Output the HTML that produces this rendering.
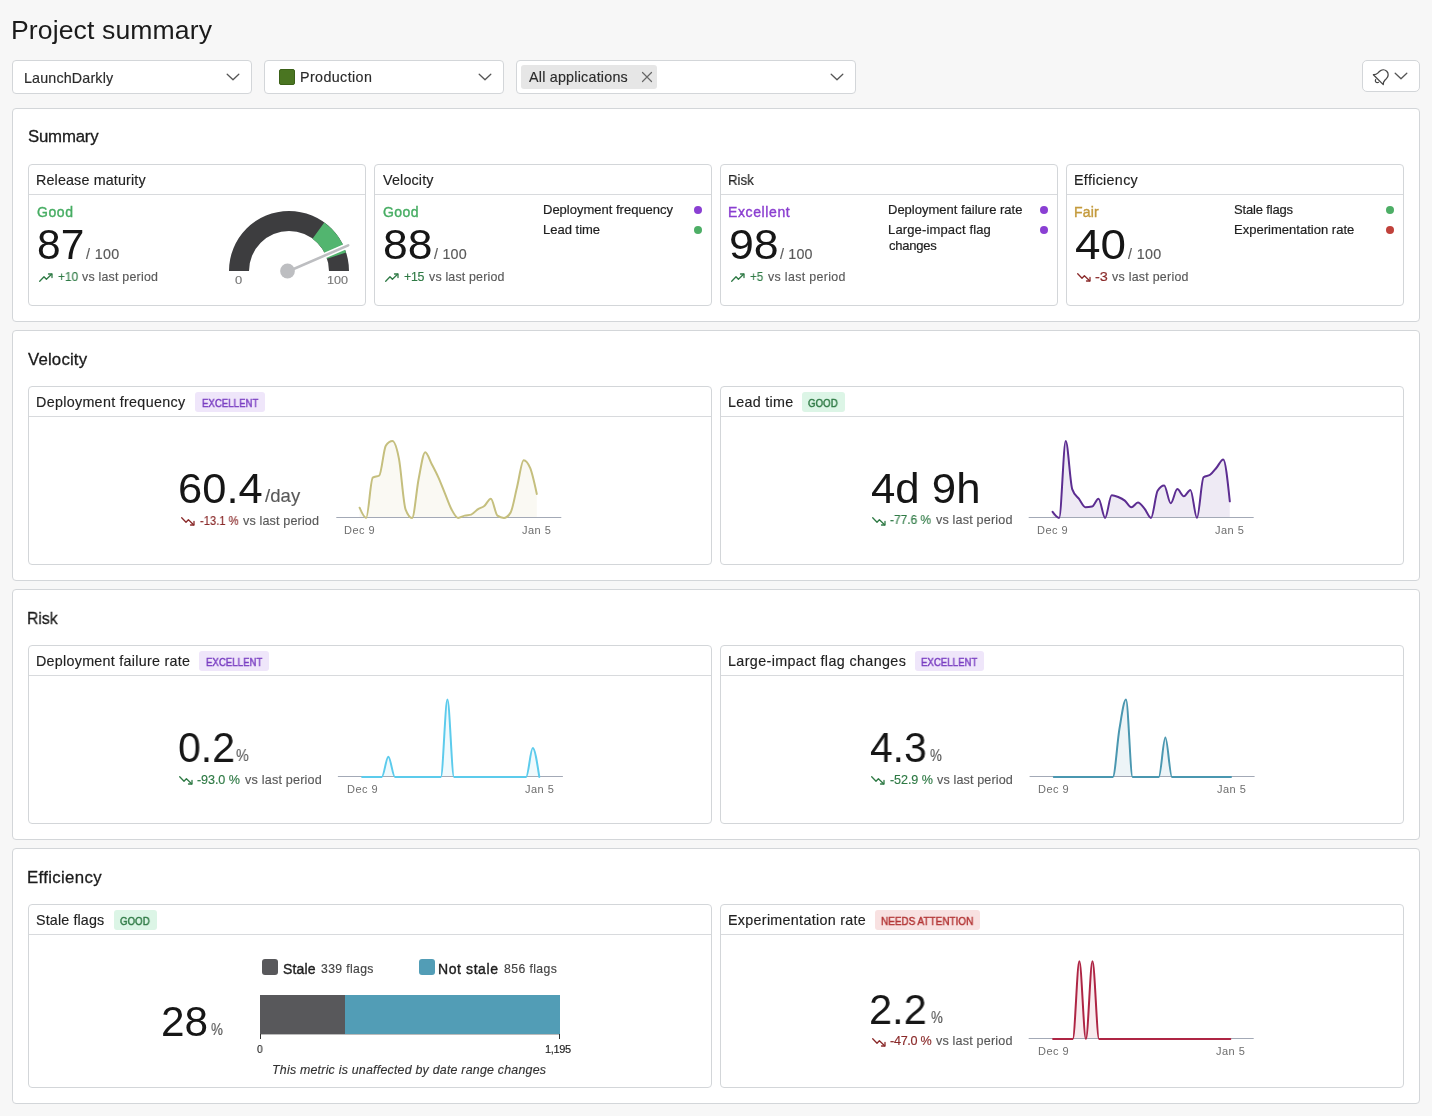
<!DOCTYPE html>
<html><head><meta charset="utf-8"><title>Project summary</title>
<style>
html,body{margin:0;padding:0;}
body{width:1432px;height:1116px;overflow:hidden;position:relative;background:#f7f7f7;font-family:"Liberation Sans", sans-serif;}
.t{position:absolute;white-space:nowrap;line-height:1;will-change:transform;}
.b{position:absolute;box-sizing:border-box;}
.ic{position:absolute;overflow:visible;}
</style></head><body>
<div class="t" style="left:11.30px;top:16.98px;font-size:26.6px;color:#1b1b1b;letter-spacing:0.107px;">Project summary</div>
<div class="b" style="left:12px;top:60px;width:240px;height:34px;background:#fff;border:1px solid #d3d6d9;border-radius:4px;"></div>
<div class="t" style="left:24.20px;top:70.54px;font-size:14.3px;color:#2b2b2b;letter-spacing:0.158px;-webkit-text-stroke:0.15px currentColor;">LaunchDarkly</div>
<svg class="ic" style="left:226px;top:72px" width="14" height="10" viewBox="0 0 14 10"><path d="M1.2 2.2 L7 7.8 L12.8 2.2" fill="none" stroke="#555" stroke-width="1.3" stroke-linecap="round" stroke-linejoin="round"/></svg>
<div class="b" style="left:264px;top:60px;width:240px;height:34px;background:#fff;border:1px solid #d3d6d9;border-radius:4px;"></div>
<div class="b" style="left:279px;top:69px;width:16px;height:16px;background:#4a7521;border:1px solid #3b6118;border-radius:2px;"></div>
<div class="t" style="left:300.00px;top:70.40px;font-size:14.3px;color:#2b2b2b;letter-spacing:0.389px;-webkit-text-stroke:0.15px currentColor;">Production</div>
<svg class="ic" style="left:478px;top:72px" width="14" height="10" viewBox="0 0 14 10"><path d="M1.2 2.2 L7 7.8 L12.8 2.2" fill="none" stroke="#555" stroke-width="1.3" stroke-linecap="round" stroke-linejoin="round"/></svg>
<div class="b" style="left:516px;top:60px;width:340px;height:34px;background:#fff;border:1px solid #d3d6d9;border-radius:4px;"></div>
<div class="b" style="left:521px;top:65px;width:136px;height:24px;background:#e6e6e6;border-radius:3px;"></div>
<div class="t" style="left:529.20px;top:69.98px;font-size:14.3px;color:#2b2b2b;letter-spacing:0.225px;-webkit-text-stroke:0.15px currentColor;">All applications</div>
<svg class="ic" style="left:641px;top:71px" width="12" height="12" viewBox="0 0 12 12"><path d="M1.5 1.5 L10.5 10.5 M10.5 1.5 L1.5 10.5" stroke="#666" stroke-width="1.2" stroke-linecap="round"/></svg>
<svg class="ic" style="left:829.6px;top:72px" width="14" height="10" viewBox="0 0 14 10"><path d="M1.2 2.2 L7 7.8 L12.8 2.2" fill="none" stroke="#555" stroke-width="1.3" stroke-linecap="round" stroke-linejoin="round"/></svg>
<div class="b" style="left:1362px;top:60px;width:58px;height:32px;background:#fff;border:1px solid #d3d6d9;border-radius:5px;"></div>
<svg class="ic" style="left:1371.8px;top:65.5px" width="20" height="20" viewBox="0 0 20 20"><g transform="rotate(45 10 10)" fill="none" stroke="#444" stroke-width="1.25" stroke-linejoin="round" stroke-linecap="round"><path d="M3 15.2 L17 15.2 C15.6 14 15 12.7 15 11 L15 8.7 C15 5.6 12.8 3.3 10 3.3 C7.2 3.3 5 5.6 5 8.7 L5 11 C5 12.7 4.4 14 3 15.2 Z"/><path d="M8 16.9 C8.3 18 9.1 18.6 10 18.6 C10.9 18.6 11.7 18 12 16.9"/></g></svg>
<svg class="ic" style="left:1394px;top:71px" width="14" height="10" viewBox="0 0 14 10"><path d="M1.2 2.2 L7 7.8 L12.8 2.2" fill="none" stroke="#555" stroke-width="1.3" stroke-linecap="round" stroke-linejoin="round"/></svg>
<div class="b" style="left:12px;top:108px;width:1408px;height:214px;background:#fff;border:1px solid #d3d6d9;border-radius:4px;"></div>
<div class="t" style="left:27.90px;top:129.38px;font-size:16.8px;color:#1b1b1b;letter-spacing:-0.201px;-webkit-text-stroke:0.3px currentColor;">Summary</div>
<div class="b" style="left:12px;top:330px;width:1408px;height:251px;background:#fff;border:1px solid #d3d6d9;border-radius:4px;"></div>
<div class="t" style="left:28.40px;top:351.64px;font-size:16.8px;color:#1b1b1b;letter-spacing:0.180px;-webkit-text-stroke:0.3px currentColor;">Velocity</div>
<div class="b" style="left:12px;top:589px;width:1408px;height:251px;background:#fff;border:1px solid #d3d6d9;border-radius:4px;"></div>
<div class="t" style="left:27.46px;top:610.54px;font-size:16.8px;color:#1b1b1b;transform:scaleX(0.9399);transform-origin:0 0;-webkit-text-stroke:0.3px currentColor;">Risk</div>
<div class="b" style="left:12px;top:848px;width:1408px;height:256px;background:#fff;border:1px solid #d3d6d9;border-radius:4px;"></div>
<div class="t" style="left:27.40px;top:869.54px;font-size:16.8px;color:#1b1b1b;letter-spacing:0.342px;-webkit-text-stroke:0.3px currentColor;">Efficiency</div>
<div class="b" style="left:28px;top:164px;width:338px;height:142px;background:#fff;border:1px solid #d3d6d9;border-radius:4px;"></div>
<div class="b" style="left:29px;top:194px;width:336px;height:1px;background:#d8dadd;"></div>
<div class="t" style="left:36.30px;top:173.40px;font-size:14.3px;color:#222;letter-spacing:0.152px;-webkit-text-stroke:0.15px currentColor;">Release maturity</div>
<div class="b" style="left:374px;top:164px;width:338px;height:142px;background:#fff;border:1px solid #d3d6d9;border-radius:4px;"></div>
<div class="b" style="left:375px;top:194px;width:336px;height:1px;background:#d8dadd;"></div>
<div class="t" style="left:383.30px;top:173.40px;font-size:14.3px;color:#222;letter-spacing:0.168px;-webkit-text-stroke:0.15px currentColor;">Velocity</div>
<div class="b" style="left:720px;top:164px;width:338px;height:142px;background:#fff;border:1px solid #d3d6d9;border-radius:4px;"></div>
<div class="b" style="left:721px;top:194px;width:336px;height:1px;background:#d8dadd;"></div>
<div class="t" style="left:728.37px;top:173.40px;font-size:14.3px;color:#222;transform:scaleX(0.9259);transform-origin:0 0;-webkit-text-stroke:0.15px currentColor;">Risk</div>
<div class="b" style="left:1066px;top:164px;width:338px;height:142px;background:#fff;border:1px solid #d3d6d9;border-radius:4px;"></div>
<div class="b" style="left:1067px;top:194px;width:336px;height:1px;background:#d8dadd;"></div>
<div class="t" style="left:1074.30px;top:173.40px;font-size:14.3px;color:#222;letter-spacing:0.314px;-webkit-text-stroke:0.15px currentColor;">Efficiency</div>
<div class="t" style="left:37.30px;top:205.09px;font-size:14px;color:#47ad63;letter-spacing:0.579px;-webkit-text-stroke:0.38px currentColor;">Good</div>
<div class="t" style="left:36.79px;top:223.61px;font-size:42px;color:#161616;transform:scaleX(1.0122);transform-origin:0 0;">87</div>
<div class="t" style="left:86.00px;top:246.56px;font-size:14.3px;color:#595959;letter-spacing:0.363px;-webkit-text-stroke:0.15px currentColor;">/ 100</div>
<svg class="ic" style="left:38.6px;top:272.5px" width="14" height="9" viewBox="0 0 14 9"><path d="M0.7 8.2 L5 3.8 L7.4 6.3 L12.6 1.2" fill="none" stroke="#2f7a45" stroke-width="1.3" stroke-linejoin="round" stroke-linecap="round"/><path d="M9.5 1 L13 1 L13 4.5" fill="none" stroke="#2f7a45" stroke-width="1.3" stroke-linejoin="round" stroke-linecap="round"/></svg>
<div class="t" style="left:57.70px;top:270.66px;font-size:12.4px;color:#2f7a45;transform:scaleX(0.9561);transform-origin:0 0;-webkit-text-stroke:0.15px currentColor;">+10</div>
<div class="t" style="left:82.40px;top:270.66px;font-size:12.4px;color:#595959;letter-spacing:0.222px;-webkit-text-stroke:0.15px currentColor;">vs last period</div>
<div class="t" style="left:383.40px;top:205.09px;font-size:14px;color:#47ad63;letter-spacing:0.413px;-webkit-text-stroke:0.38px currentColor;">Good</div>
<div class="t" style="left:382.74px;top:223.61px;font-size:42px;color:#161616;transform:scaleX(1.0596);transform-origin:0 0;">88</div>
<div class="t" style="left:434.00px;top:246.56px;font-size:14.3px;color:#595959;letter-spacing:0.238px;-webkit-text-stroke:0.15px currentColor;">/ 100</div>
<svg class="ic" style="left:384.8px;top:272.5px" width="14" height="9" viewBox="0 0 14 9"><path d="M0.7 8.2 L5 3.8 L7.4 6.3 L12.6 1.2" fill="none" stroke="#2f7a45" stroke-width="1.3" stroke-linejoin="round" stroke-linecap="round"/><path d="M9.5 1 L13 1 L13 4.5" fill="none" stroke="#2f7a45" stroke-width="1.3" stroke-linejoin="round" stroke-linecap="round"/></svg>
<div class="t" style="left:404.00px;top:270.66px;font-size:12.4px;color:#2f7a45;letter-spacing:-0.314px;-webkit-text-stroke:0.15px currentColor;">+15</div>
<div class="t" style="left:429.00px;top:270.66px;font-size:12.4px;color:#595959;letter-spacing:0.184px;-webkit-text-stroke:0.15px currentColor;">vs last period</div>
<div class="t" style="left:728.30px;top:205.09px;font-size:14px;color:#8b3fd0;letter-spacing:0.610px;-webkit-text-stroke:0.38px currentColor;">Excellent</div>
<div class="t" style="left:728.74px;top:223.61px;font-size:42px;color:#161616;transform:scaleX(1.0641);transform-origin:0 0;">98</div>
<div class="t" style="left:780.20px;top:246.56px;font-size:14.3px;color:#595959;letter-spacing:0.188px;-webkit-text-stroke:0.15px currentColor;">/ 100</div>
<svg class="ic" style="left:730.6px;top:272.5px" width="14" height="9" viewBox="0 0 14 9"><path d="M0.7 8.2 L5 3.8 L7.4 6.3 L12.6 1.2" fill="none" stroke="#2f7a45" stroke-width="1.3" stroke-linejoin="round" stroke-linecap="round"/><path d="M9.5 1 L13 1 L13 4.5" fill="none" stroke="#2f7a45" stroke-width="1.3" stroke-linejoin="round" stroke-linecap="round"/></svg>
<div class="t" style="left:749.60px;top:270.66px;font-size:12.4px;color:#2f7a45;transform:scaleX(0.9343);transform-origin:0 0;-webkit-text-stroke:0.15px currentColor;">+5</div>
<div class="t" style="left:767.50px;top:270.66px;font-size:12.4px;color:#595959;letter-spacing:0.338px;-webkit-text-stroke:0.15px currentColor;">vs last period</div>
<div class="t" style="left:1074.30px;top:205.09px;font-size:14px;color:#c49a3c;letter-spacing:0.217px;-webkit-text-stroke:0.38px currentColor;">Fair</div>
<div class="t" style="left:1075.00px;top:223.61px;font-size:42px;color:#161616;transform:scaleX(1.0913);transform-origin:0 0;">40</div>
<div class="t" style="left:1127.50px;top:246.56px;font-size:14.3px;color:#595959;letter-spacing:0.363px;-webkit-text-stroke:0.15px currentColor;">/ 100</div>
<svg class="ic" style="left:1076.6px;top:272.5px" width="14" height="9" viewBox="0 0 14 9"><path d="M0.7 0.8 L5 5.2 L7.4 2.7 L12.6 7.8" fill="none" stroke="#8a2a2a" stroke-width="1.3" stroke-linejoin="round" stroke-linecap="round"/><path d="M9.5 8 L13 8 L13 4.5" fill="none" stroke="#8a2a2a" stroke-width="1.3" stroke-linejoin="round" stroke-linecap="round"/></svg>
<div class="t" style="left:1095.00px;top:270.66px;font-size:12.4px;color:#8a2a2a;transform:scaleX(1.1684);transform-origin:0 0;-webkit-text-stroke:0.15px currentColor;">-3</div>
<div class="t" style="left:1112.00px;top:270.66px;font-size:12.4px;color:#595959;letter-spacing:0.268px;-webkit-text-stroke:0.15px currentColor;">vs last period</div>
<div class="t" style="left:542.50px;top:203.34px;font-size:13.0px;color:#1e1e1e;-webkit-text-stroke:0.2px currentColor;">Deployment frequency</div>
<div class="b" style="left:694px;top:205.8px;width:8px;height:8px;border-radius:50%;background:#8a3fd3"></div>
<div class="t" style="left:542.50px;top:223.40px;font-size:13.0px;color:#1e1e1e;-webkit-text-stroke:0.2px currentColor;">Lead time</div>
<div class="b" style="left:694px;top:226.0px;width:8px;height:8px;border-radius:50%;background:#4dae66"></div>
<div class="t" style="left:888.10px;top:203.34px;font-size:13.0px;color:#1e1e1e;-webkit-text-stroke:0.2px currentColor;">Deployment failure rate</div>
<div class="b" style="left:1040px;top:205.8px;width:8px;height:8px;border-radius:50%;background:#8a3fd3"></div>
<div class="t" style="left:888.10px;top:223.40px;font-size:13.0px;color:#1e1e1e;letter-spacing:0.149px;-webkit-text-stroke:0.2px currentColor;">Large-impact flag</div>
<div class="b" style="left:1040px;top:226.0px;width:8px;height:8px;border-radius:50%;background:#8a3fd3"></div>
<div class="t" style="left:889.10px;top:239.08px;font-size:13.0px;color:#1e1e1e;letter-spacing:-0.225px;-webkit-text-stroke:0.2px currentColor;">changes</div>
<div class="t" style="left:1234.20px;top:203.34px;font-size:13.0px;color:#1e1e1e;letter-spacing:-0.160px;-webkit-text-stroke:0.2px currentColor;">Stale flags</div>
<div class="b" style="left:1386px;top:205.8px;width:8px;height:8px;border-radius:50%;background:#4dae66"></div>
<div class="t" style="left:1234.20px;top:223.40px;font-size:13.0px;color:#1e1e1e;letter-spacing:0.015px;-webkit-text-stroke:0.2px currentColor;">Experimentation rate</div>
<div class="b" style="left:1386px;top:226.0px;width:8px;height:8px;border-radius:50%;background:#c0413b"></div>
<svg class="ic" style="left:0;top:0" width="1432" height="330" viewBox="0 0 1432 330"><path d="M229.00,271.00 A60,60 0 0 1 349.00,271.00 L329.00,271.00 A40,40 0 0 0 249.00,271.00 Z" fill="#3d3d3f"/><path d="M324.27,222.46 A60,60 0 0 1 346.06,252.46 L327.04,258.64 A40,40 0 0 0 312.51,238.64 Z" fill="#52b56f"/><line x1="289" y1="271" x2="348.20" y2="245.38" stroke="#fff" stroke-width="5.5" stroke-linecap="round"/><line x1="289" y1="271" x2="348.20" y2="245.38" stroke="#bdbec1" stroke-width="2.6" stroke-linecap="round"/><circle cx="287.5" cy="271" r="7.4" fill="#bdbec1"/></svg>
<div class="t" style="left:235.30px;top:273.98px;font-size:11.6px;color:#777;transform:scaleX(1.1167);transform-origin:0 0;-webkit-text-stroke:0.15px currentColor;">0</div>
<div class="t" style="left:326.50px;top:273.98px;font-size:11.6px;color:#777;transform:scaleX(1.0849);transform-origin:0 0;-webkit-text-stroke:0.15px currentColor;">100</div>
<div class="b" style="left:28px;top:386px;width:684px;height:179px;background:#fff;border:1px solid #d3d6d9;border-radius:4px;"></div>
<div class="b" style="left:29px;top:416px;width:682px;height:1px;background:#d8dadd;"></div>
<div class="t" style="left:36.30px;top:395.40px;font-size:14.3px;color:#222;letter-spacing:0.316px;-webkit-text-stroke:0.15px currentColor;">Deployment frequency</div>
<div class="b" style="left:195px;top:392px;width:70px;height:20px;background:#efe6fa;border-radius:3px;"></div>
<div class="t" style="left:201.60px;top:397.59px;font-size:11px;color:#7a3fc2;transform:scaleX(0.8779);transform-origin:0 0;-webkit-text-stroke:0.45px currentColor;">EXCELLENT</div>
<div class="b" style="left:720px;top:386px;width:684px;height:179px;background:#fff;border:1px solid #d3d6d9;border-radius:4px;"></div>
<div class="b" style="left:721px;top:416px;width:682px;height:1px;background:#d8dadd;"></div>
<div class="t" style="left:728.30px;top:395.40px;font-size:14.3px;color:#222;letter-spacing:0.296px;-webkit-text-stroke:0.15px currentColor;">Lead time</div>
<div class="b" style="left:802px;top:392px;width:43px;height:20px;background:#dcf5e6;border-radius:3px;"></div>
<div class="t" style="left:808.30px;top:397.59px;font-size:11px;color:#2f7a45;transform:scaleX(0.8851);transform-origin:0 0;-webkit-text-stroke:0.45px currentColor;">GOOD</div>
<div class="t" style="left:178.43px;top:467.95px;font-size:42px;color:#161616;transform:scaleX(1.0355);transform-origin:0 0;">60.4</div>
<div class="t" style="left:265.10px;top:487.44px;font-size:18.5px;color:#595959;letter-spacing:0.094px;-webkit-text-stroke:0.15px currentColor;">/day</div>
<svg class="ic" style="left:180.5px;top:517.0999999999999px" width="14" height="9" viewBox="0 0 14 9"><path d="M0.7 0.8 L5 5.2 L7.4 2.7 L12.6 7.8" fill="none" stroke="#8a2a2a" stroke-width="1.3" stroke-linejoin="round" stroke-linecap="round"/><path d="M9.5 8 L13 8 L13 4.5" fill="none" stroke="#8a2a2a" stroke-width="1.3" stroke-linejoin="round" stroke-linecap="round"/></svg>
<div class="t" style="left:199.70px;top:515.37px;font-size:12.6px;color:#8a2a2a;transform:scaleX(0.8888);transform-origin:0 0;-webkit-text-stroke:0.15px currentColor;">-13.1 %</div>
<div class="t" style="left:243.40px;top:515.37px;font-size:12.6px;color:#595959;letter-spacing:0.139px;-webkit-text-stroke:0.15px currentColor;">vs last period</div>
<svg class="ic" style="left:0;top:0" width="1432" height="1116" viewBox="0 0 1432 1116"><path d="M359.60,507.70C361.79,512.80 363.98,517.90 366.16,517.90C368.35,517.90 370.54,479.17 372.73,477.70C374.91,476.23 377.10,476.97 379.29,475.50C381.48,474.03 383.66,448.67 385.85,445.60C388.04,442.53 390.23,441.00 392.42,441.00C394.60,441.00 396.79,447.52 398.98,458.90C401.17,470.28 403.35,503.57 405.54,509.30C407.73,515.03 409.92,517.90 412.10,517.90C414.29,517.90 416.48,489.75 418.67,478.80C420.85,467.85 423.04,452.20 425.23,452.20C427.42,452.20 429.61,460.00 431.79,464.20C433.98,468.40 436.17,472.53 438.36,477.40C440.54,482.27 442.73,488.08 444.92,493.40C447.11,498.72 449.29,505.22 451.48,509.30C453.67,513.38 455.86,517.90 458.05,517.90C460.23,517.90 462.42,516.15 464.61,515.60C466.80,515.05 468.98,515.27 471.17,514.60C473.36,513.93 475.55,510.73 477.73,509.30C479.92,507.87 482.11,507.77 484.30,506.00C486.48,504.23 488.67,498.70 490.86,498.70C493.05,498.70 495.24,514.07 497.42,515.60C499.61,517.13 501.80,517.90 503.99,517.90C506.17,517.90 508.36,516.13 510.55,512.60C512.74,509.07 514.92,495.43 517.11,486.70C519.30,477.97 521.49,460.20 523.67,460.20C525.86,460.20 528.05,462.87 530.24,468.20C532.43,473.53 534.61,483.77 536.80,494.00L536.80,517L359.60,517Z" fill="rgba(197,191,126,0.09)"/><line x1="336.3" y1="517.5" x2="561.3" y2="517.5" stroke="#a3a9b6" stroke-width="1"/><path d="M359.60,507.70C361.79,512.80 363.98,517.90 366.16,517.90C368.35,517.90 370.54,479.17 372.73,477.70C374.91,476.23 377.10,476.97 379.29,475.50C381.48,474.03 383.66,448.67 385.85,445.60C388.04,442.53 390.23,441.00 392.42,441.00C394.60,441.00 396.79,447.52 398.98,458.90C401.17,470.28 403.35,503.57 405.54,509.30C407.73,515.03 409.92,517.90 412.10,517.90C414.29,517.90 416.48,489.75 418.67,478.80C420.85,467.85 423.04,452.20 425.23,452.20C427.42,452.20 429.61,460.00 431.79,464.20C433.98,468.40 436.17,472.53 438.36,477.40C440.54,482.27 442.73,488.08 444.92,493.40C447.11,498.72 449.29,505.22 451.48,509.30C453.67,513.38 455.86,517.90 458.05,517.90C460.23,517.90 462.42,516.15 464.61,515.60C466.80,515.05 468.98,515.27 471.17,514.60C473.36,513.93 475.55,510.73 477.73,509.30C479.92,507.87 482.11,507.77 484.30,506.00C486.48,504.23 488.67,498.70 490.86,498.70C493.05,498.70 495.24,514.07 497.42,515.60C499.61,517.13 501.80,517.90 503.99,517.90C506.17,517.90 508.36,516.13 510.55,512.60C512.74,509.07 514.92,495.43 517.11,486.70C519.30,477.97 521.49,460.20 523.67,460.20C525.86,460.20 528.05,462.87 530.24,468.20C532.43,473.53 534.61,483.77 536.80,494.00" fill="none" stroke="#c5bf7e" stroke-width="2" stroke-linejoin="round" stroke-linecap="round"/></svg>
<div class="t" style="left:344.20px;top:524.63px;font-size:11px;color:#6e6e6e;letter-spacing:0.496px;;">Dec 9</div>
<div class="t" style="left:522.30px;top:524.63px;font-size:11px;color:#6e6e6e;letter-spacing:0.502px;;">Jan 5</div>
<div class="t" style="left:870.90px;top:467.95px;font-size:42px;color:#161616;transform:scaleX(1.0424);transform-origin:0 0;">4d 9h</div>
<svg class="ic" style="left:871.8px;top:516.5px" width="14" height="9" viewBox="0 0 14 9"><path d="M0.7 0.8 L5 5.2 L7.4 2.7 L12.6 7.8" fill="none" stroke="#2f7a45" stroke-width="1.3" stroke-linejoin="round" stroke-linecap="round"/><path d="M9.5 8 L13 8 L13 4.5" fill="none" stroke="#2f7a45" stroke-width="1.3" stroke-linejoin="round" stroke-linecap="round"/></svg>
<div class="t" style="left:890.20px;top:514.49px;font-size:12.6px;color:#2f7a45;transform:scaleX(0.9444);transform-origin:0 0;-webkit-text-stroke:0.15px currentColor;">-77.6 %</div>
<div class="t" style="left:936.30px;top:514.49px;font-size:12.6px;color:#595959;letter-spacing:0.177px;-webkit-text-stroke:0.15px currentColor;">vs last period</div>
<svg class="ic" style="left:0;top:0" width="1432" height="1116" viewBox="0 0 1432 1116"><path d="M1052.60,511.90C1054.79,514.90 1056.98,517.90 1059.16,517.90C1061.35,517.90 1063.54,441.00 1065.73,441.00C1067.91,441.00 1070.10,483.20 1072.29,489.40C1074.48,495.60 1076.66,495.72 1078.85,498.70C1081.04,501.68 1083.23,507.30 1085.41,507.30C1087.60,507.30 1089.79,507.07 1091.98,506.60C1094.17,506.13 1096.35,498.70 1098.54,498.70C1100.73,498.70 1102.92,517.90 1105.10,517.90C1107.29,517.90 1109.48,495.30 1111.67,495.30C1113.85,495.30 1116.04,496.12 1118.23,497.00C1120.42,497.88 1122.61,498.88 1124.79,500.60C1126.98,502.32 1129.17,507.30 1131.36,507.30C1133.54,507.30 1135.73,502.60 1137.92,502.60C1140.11,502.60 1142.29,506.05 1144.48,508.60C1146.67,511.15 1148.86,517.90 1151.04,517.90C1153.23,517.90 1155.42,494.23 1157.61,490.70C1159.80,487.17 1161.98,485.40 1164.17,485.40C1166.36,485.40 1168.55,503.30 1170.73,503.30C1172.92,503.30 1175.11,489.10 1177.30,489.10C1179.48,489.10 1181.67,496.30 1183.86,496.30C1186.05,496.30 1188.24,490.00 1190.42,490.00C1192.61,490.00 1194.80,517.90 1196.99,517.90C1199.17,517.90 1201.36,478.80 1203.55,477.20C1205.74,475.60 1207.92,476.40 1210.11,474.80C1212.30,473.20 1214.49,470.05 1216.67,467.50C1218.86,464.95 1221.05,459.50 1223.24,459.50C1225.43,459.50 1227.61,480.40 1229.80,501.30L1229.80,517L1052.60,517Z" fill="rgba(92,45,145,0.10)"/><line x1="1028.7" y1="517.5" x2="1253.7" y2="517.5" stroke="#a3a9b6" stroke-width="1"/><path d="M1052.60,511.90C1054.79,514.90 1056.98,517.90 1059.16,517.90C1061.35,517.90 1063.54,441.00 1065.73,441.00C1067.91,441.00 1070.10,483.20 1072.29,489.40C1074.48,495.60 1076.66,495.72 1078.85,498.70C1081.04,501.68 1083.23,507.30 1085.41,507.30C1087.60,507.30 1089.79,507.07 1091.98,506.60C1094.17,506.13 1096.35,498.70 1098.54,498.70C1100.73,498.70 1102.92,517.90 1105.10,517.90C1107.29,517.90 1109.48,495.30 1111.67,495.30C1113.85,495.30 1116.04,496.12 1118.23,497.00C1120.42,497.88 1122.61,498.88 1124.79,500.60C1126.98,502.32 1129.17,507.30 1131.36,507.30C1133.54,507.30 1135.73,502.60 1137.92,502.60C1140.11,502.60 1142.29,506.05 1144.48,508.60C1146.67,511.15 1148.86,517.90 1151.04,517.90C1153.23,517.90 1155.42,494.23 1157.61,490.70C1159.80,487.17 1161.98,485.40 1164.17,485.40C1166.36,485.40 1168.55,503.30 1170.73,503.30C1172.92,503.30 1175.11,489.10 1177.30,489.10C1179.48,489.10 1181.67,496.30 1183.86,496.30C1186.05,496.30 1188.24,490.00 1190.42,490.00C1192.61,490.00 1194.80,517.90 1196.99,517.90C1199.17,517.90 1201.36,478.80 1203.55,477.20C1205.74,475.60 1207.92,476.40 1210.11,474.80C1212.30,473.20 1214.49,470.05 1216.67,467.50C1218.86,464.95 1221.05,459.50 1223.24,459.50C1225.43,459.50 1227.61,480.40 1229.80,501.30" fill="none" stroke="#5c2d91" stroke-width="2" stroke-linejoin="round" stroke-linecap="round"/></svg>
<div class="t" style="left:1037.20px;top:524.63px;font-size:11px;color:#6e6e6e;letter-spacing:0.496px;;">Dec 9</div>
<div class="t" style="left:1215.30px;top:524.63px;font-size:11px;color:#6e6e6e;letter-spacing:0.502px;;">Jan 5</div>
<div class="b" style="left:28px;top:645px;width:684px;height:179px;background:#fff;border:1px solid #d3d6d9;border-radius:4px;"></div>
<div class="b" style="left:29px;top:675px;width:682px;height:1px;background:#d8dadd;"></div>
<div class="t" style="left:36.30px;top:654.40px;font-size:14.3px;color:#222;letter-spacing:0.275px;-webkit-text-stroke:0.15px currentColor;">Deployment failure rate</div>
<div class="b" style="left:199px;top:651px;width:70px;height:20px;background:#efe6fa;border-radius:3px;"></div>
<div class="t" style="left:205.60px;top:656.59px;font-size:11px;color:#7a3fc2;transform:scaleX(0.8779);transform-origin:0 0;-webkit-text-stroke:0.45px currentColor;">EXCELLENT</div>
<div class="b" style="left:720px;top:645px;width:684px;height:179px;background:#fff;border:1px solid #d3d6d9;border-radius:4px;"></div>
<div class="b" style="left:721px;top:675px;width:682px;height:1px;background:#d8dadd;"></div>
<div class="t" style="left:728.30px;top:654.40px;font-size:14.3px;color:#222;letter-spacing:0.390px;-webkit-text-stroke:0.15px currentColor;">Large-impact flag changes</div>
<div class="b" style="left:915px;top:651px;width:69px;height:20px;background:#efe6fa;border-radius:3px;"></div>
<div class="t" style="left:921.10px;top:656.59px;font-size:11px;color:#7a3fc2;transform:scaleX(0.8779);transform-origin:0 0;-webkit-text-stroke:0.45px currentColor;">EXCELLENT</div>
<div class="t" style="left:177.52px;top:726.61px;font-size:42px;color:#161616;transform:scaleX(0.9781);transform-origin:0 0;">0.2</div>
<div class="t" style="left:236.40px;top:747.11px;font-size:17px;color:#595959;transform:scaleX(0.8400);transform-origin:0 0;-webkit-text-stroke:0.15px currentColor;">%</div>
<svg class="ic" style="left:178.5px;top:775.8px" width="14" height="9" viewBox="0 0 14 9"><path d="M0.7 0.8 L5 5.2 L7.4 2.7 L12.6 7.8" fill="none" stroke="#2f7a45" stroke-width="1.3" stroke-linejoin="round" stroke-linecap="round"/><path d="M9.5 8 L13 8 L13 4.5" fill="none" stroke="#2f7a45" stroke-width="1.3" stroke-linejoin="round" stroke-linecap="round"/></svg>
<div class="t" style="left:197.40px;top:773.83px;font-size:12.6px;color:#2f7a45;letter-spacing:-0.084px;-webkit-text-stroke:0.15px currentColor;">-93.0 %</div>
<div class="t" style="left:245.00px;top:773.83px;font-size:12.6px;color:#595959;letter-spacing:0.201px;-webkit-text-stroke:0.15px currentColor;">vs last period</div>
<svg class="ic" style="left:0;top:0" width="1432" height="1116" viewBox="0 0 1432 1116"><path d="M362.10,776.90C364.29,776.90 366.48,776.90 368.66,776.90C370.85,776.90 373.04,776.90 375.23,776.90C377.41,776.90 379.60,776.90 381.79,776.90C383.98,776.90 386.16,756.80 388.35,756.80C390.54,756.80 392.73,776.90 394.92,776.90C397.10,776.90 399.29,776.90 401.48,776.90C403.67,776.90 405.85,776.90 408.04,776.90C410.23,776.90 412.42,776.90 414.60,776.90C416.79,776.90 418.98,776.90 421.17,776.90C423.35,776.90 425.54,776.90 427.73,776.90C429.92,776.90 432.11,776.90 434.29,776.90C436.48,776.90 438.67,776.90 440.86,776.90C443.04,776.90 445.23,699.60 447.42,699.60C449.61,699.60 451.79,776.90 453.98,776.90C456.17,776.90 458.36,776.90 460.55,776.90C462.73,776.90 464.92,776.90 467.11,776.90C469.30,776.90 471.48,776.90 473.67,776.90C475.86,776.90 478.05,776.90 480.23,776.90C482.42,776.90 484.61,776.90 486.80,776.90C488.98,776.90 491.17,776.90 493.36,776.90C495.55,776.90 497.74,776.90 499.92,776.90C502.11,776.90 504.30,776.90 506.49,776.90C508.67,776.90 510.86,776.90 513.05,776.90C515.24,776.90 517.42,776.90 519.61,776.90C521.80,776.90 523.99,776.90 526.17,776.90C528.36,776.90 530.55,748.10 532.74,748.10C534.93,748.10 537.11,762.50 539.30,776.90L539.30,776L362.10,776Z" fill="rgba(92,203,236,0.09)"/><line x1="337.9" y1="776.5" x2="562.9" y2="776.5" stroke="#a3a9b6" stroke-width="1"/><path d="M362.10,776.90C364.29,776.90 366.48,776.90 368.66,776.90C370.85,776.90 373.04,776.90 375.23,776.90C377.41,776.90 379.60,776.90 381.79,776.90C383.98,776.90 386.16,756.80 388.35,756.80C390.54,756.80 392.73,776.90 394.92,776.90C397.10,776.90 399.29,776.90 401.48,776.90C403.67,776.90 405.85,776.90 408.04,776.90C410.23,776.90 412.42,776.90 414.60,776.90C416.79,776.90 418.98,776.90 421.17,776.90C423.35,776.90 425.54,776.90 427.73,776.90C429.92,776.90 432.11,776.90 434.29,776.90C436.48,776.90 438.67,776.90 440.86,776.90C443.04,776.90 445.23,699.60 447.42,699.60C449.61,699.60 451.79,776.90 453.98,776.90C456.17,776.90 458.36,776.90 460.55,776.90C462.73,776.90 464.92,776.90 467.11,776.90C469.30,776.90 471.48,776.90 473.67,776.90C475.86,776.90 478.05,776.90 480.23,776.90C482.42,776.90 484.61,776.90 486.80,776.90C488.98,776.90 491.17,776.90 493.36,776.90C495.55,776.90 497.74,776.90 499.92,776.90C502.11,776.90 504.30,776.90 506.49,776.90C508.67,776.90 510.86,776.90 513.05,776.90C515.24,776.90 517.42,776.90 519.61,776.90C521.80,776.90 523.99,776.90 526.17,776.90C528.36,776.90 530.55,748.10 532.74,748.10C534.93,748.10 537.11,762.50 539.30,776.90" fill="none" stroke="#5ccbec" stroke-width="2" stroke-linejoin="round" stroke-linecap="round"/></svg>
<div class="t" style="left:346.65px;top:783.63px;font-size:11px;color:#6e6e6e;letter-spacing:0.496px;;">Dec 9</div>
<div class="t" style="left:524.75px;top:783.63px;font-size:11px;color:#6e6e6e;letter-spacing:0.502px;;">Jan 5</div>
<div class="t" style="left:869.90px;top:726.55px;font-size:42px;color:#161616;transform:scaleX(0.9732);transform-origin:0 0;">4.3</div>
<div class="t" style="left:930.00px;top:747.11px;font-size:17px;color:#595959;transform:scaleX(0.7800);transform-origin:0 0;-webkit-text-stroke:0.15px currentColor;">%</div>
<svg class="ic" style="left:870.8px;top:776.0px" width="14" height="9" viewBox="0 0 14 9"><path d="M0.7 0.8 L5 5.2 L7.4 2.7 L12.6 7.8" fill="none" stroke="#2f7a45" stroke-width="1.3" stroke-linejoin="round" stroke-linecap="round"/><path d="M9.5 8 L13 8 L13 4.5" fill="none" stroke="#2f7a45" stroke-width="1.3" stroke-linejoin="round" stroke-linecap="round"/></svg>
<div class="t" style="left:889.60px;top:774.39px;font-size:12.6px;color:#2f7a45;letter-spacing:-0.084px;-webkit-text-stroke:0.15px currentColor;">-52.9 %</div>
<div class="t" style="left:937.40px;top:774.39px;font-size:12.6px;color:#595959;letter-spacing:0.124px;-webkit-text-stroke:0.15px currentColor;">vs last period</div>
<svg class="ic" style="left:0;top:0" width="1432" height="1116" viewBox="0 0 1432 1116"><path d="M1053.80,776.90C1055.99,776.90 1058.18,776.90 1060.36,776.90C1062.55,776.90 1064.74,776.90 1066.93,776.90C1069.11,776.90 1071.30,776.90 1073.49,776.90C1075.68,776.90 1077.86,776.90 1080.05,776.90C1082.24,776.90 1084.43,776.90 1086.62,776.90C1088.80,776.90 1090.99,776.90 1093.18,776.90C1095.37,776.90 1097.55,776.90 1099.74,776.90C1101.93,776.90 1104.12,776.90 1106.30,776.90C1108.49,776.90 1110.68,776.90 1112.87,776.90C1115.05,776.90 1117.24,741.78 1119.43,728.90C1121.62,716.02 1123.81,699.60 1125.99,699.60C1128.18,699.60 1130.37,776.90 1132.56,776.90C1134.74,776.90 1136.93,776.90 1139.12,776.90C1141.31,776.90 1143.49,776.90 1145.68,776.90C1147.87,776.90 1150.06,776.90 1152.24,776.90C1154.43,776.90 1156.62,776.90 1158.81,776.90C1161.00,776.90 1163.18,737.60 1165.37,737.60C1167.56,737.60 1169.75,776.90 1171.93,776.90C1174.12,776.90 1176.31,776.90 1178.50,776.90C1180.68,776.90 1182.87,776.90 1185.06,776.90C1187.25,776.90 1189.44,776.90 1191.62,776.90C1193.81,776.90 1196.00,776.90 1198.19,776.90C1200.37,776.90 1202.56,776.90 1204.75,776.90C1206.94,776.90 1209.12,776.90 1211.31,776.90C1213.50,776.90 1215.69,776.90 1217.88,776.90C1220.06,776.90 1222.25,776.90 1224.44,776.90C1226.63,776.90 1228.81,776.90 1231.00,776.90L1231.00,776L1053.80,776Z" fill="rgba(74,151,176,0.10)"/><line x1="1029.6" y1="776.5" x2="1254.6" y2="776.5" stroke="#a3a9b6" stroke-width="1"/><path d="M1053.80,776.90C1055.99,776.90 1058.18,776.90 1060.36,776.90C1062.55,776.90 1064.74,776.90 1066.93,776.90C1069.11,776.90 1071.30,776.90 1073.49,776.90C1075.68,776.90 1077.86,776.90 1080.05,776.90C1082.24,776.90 1084.43,776.90 1086.62,776.90C1088.80,776.90 1090.99,776.90 1093.18,776.90C1095.37,776.90 1097.55,776.90 1099.74,776.90C1101.93,776.90 1104.12,776.90 1106.30,776.90C1108.49,776.90 1110.68,776.90 1112.87,776.90C1115.05,776.90 1117.24,741.78 1119.43,728.90C1121.62,716.02 1123.81,699.60 1125.99,699.60C1128.18,699.60 1130.37,776.90 1132.56,776.90C1134.74,776.90 1136.93,776.90 1139.12,776.90C1141.31,776.90 1143.49,776.90 1145.68,776.90C1147.87,776.90 1150.06,776.90 1152.24,776.90C1154.43,776.90 1156.62,776.90 1158.81,776.90C1161.00,776.90 1163.18,737.60 1165.37,737.60C1167.56,737.60 1169.75,776.90 1171.93,776.90C1174.12,776.90 1176.31,776.90 1178.50,776.90C1180.68,776.90 1182.87,776.90 1185.06,776.90C1187.25,776.90 1189.44,776.90 1191.62,776.90C1193.81,776.90 1196.00,776.90 1198.19,776.90C1200.37,776.90 1202.56,776.90 1204.75,776.90C1206.94,776.90 1209.12,776.90 1211.31,776.90C1213.50,776.90 1215.69,776.90 1217.88,776.90C1220.06,776.90 1222.25,776.90 1224.44,776.90C1226.63,776.90 1228.81,776.90 1231.00,776.90" fill="none" stroke="#4a97b0" stroke-width="2" stroke-linejoin="round" stroke-linecap="round"/></svg>
<div class="t" style="left:1038.40px;top:783.63px;font-size:11px;color:#6e6e6e;letter-spacing:0.496px;;">Dec 9</div>
<div class="t" style="left:1216.50px;top:783.63px;font-size:11px;color:#6e6e6e;letter-spacing:0.502px;;">Jan 5</div>
<div class="b" style="left:28px;top:904px;width:684px;height:184px;background:#fff;border:1px solid #d3d6d9;border-radius:4px;"></div>
<div class="b" style="left:29px;top:934px;width:682px;height:1px;background:#d8dadd;"></div>
<div class="t" style="left:36.30px;top:913.40px;font-size:14.3px;color:#222;letter-spacing:0.139px;-webkit-text-stroke:0.15px currentColor;">Stale flags</div>
<div class="b" style="left:114px;top:910px;width:43px;height:20px;background:#dcf5e6;border-radius:3px;"></div>
<div class="t" style="left:120.30px;top:915.59px;font-size:11px;color:#2f7a45;transform:scaleX(0.8851);transform-origin:0 0;-webkit-text-stroke:0.45px currentColor;">GOOD</div>
<div class="b" style="left:720px;top:904px;width:684px;height:184px;background:#fff;border:1px solid #d3d6d9;border-radius:4px;"></div>
<div class="b" style="left:721px;top:934px;width:682px;height:1px;background:#d8dadd;"></div>
<div class="t" style="left:728.30px;top:913.40px;font-size:14.3px;color:#222;letter-spacing:0.307px;-webkit-text-stroke:0.15px currentColor;">Experimentation rate</div>
<div class="b" style="left:875px;top:910px;width:105px;height:20px;background:#f8e1e1;border-radius:3px;"></div>
<div class="t" style="left:881.15px;top:915.59px;font-size:11px;color:#b23434;transform:scaleX(0.9061);transform-origin:0 0;-webkit-text-stroke:0.45px currentColor;">NEEDS ATTENTION</div>
<div class="t" style="left:160.68px;top:1000.55px;font-size:42px;color:#161616;transform:scaleX(1.0079);transform-origin:0 0;">28</div>
<div class="t" style="left:210.60px;top:1020.55px;font-size:17px;color:#595959;transform:scaleX(0.7867);transform-origin:0 0;-webkit-text-stroke:0.15px currentColor;">%</div>
<div class="b" style="left:262px;top:959px;width:16px;height:16px;background:#58585b;border-radius:3px;"></div>
<div class="t" style="left:282.60px;top:961.51px;font-size:14px;color:#1e1e1e;letter-spacing:0.144px;-webkit-text-stroke:0.38px currentColor;">Stale</div>
<div class="t" style="left:321.10px;top:963.23px;font-size:12.2px;color:#444;letter-spacing:0.366px;-webkit-text-stroke:0.15px currentColor;">339 flags</div>
<div class="b" style="left:419px;top:959px;width:16px;height:16px;background:#529db6;border-radius:3px;"></div>
<div class="t" style="left:438.40px;top:961.51px;font-size:14px;color:#1e1e1e;letter-spacing:0.592px;-webkit-text-stroke:0.38px currentColor;">Not stale</div>
<div class="t" style="left:504.00px;top:963.23px;font-size:12.2px;color:#444;letter-spacing:0.416px;-webkit-text-stroke:0.15px currentColor;">856 flags</div>
<div class="b" style="left:260px;top:995px;width:85px;height:39px;background:#58585b;"></div>
<div class="b" style="left:345px;top:995px;width:215px;height:39px;background:#529db6;"></div>
<div class="b" style="left:260px;top:1034px;width:300px;height:1px;background:#bbb;"></div>
<div class="b" style="left:260px;top:1034px;width:1px;height:5px;background:#333;"></div>
<div class="b" style="left:559px;top:1034px;width:1px;height:5px;background:#333;"></div>
<div class="t" style="left:257.30px;top:1044.19px;font-size:11px;color:#222;transform:scaleX(0.9167);transform-origin:0 0;-webkit-text-stroke:0.15px currentColor;">0</div>
<div class="t" style="left:545.10px;top:1044.44px;font-size:11px;color:#222;letter-spacing:-0.327px;-webkit-text-stroke:0.15px currentColor;">1,195</div>
<div class="t" style="left:272.20px;top:1063.66px;font-size:12.4px;color:#333;letter-spacing:0.222px;font-style:italic;-webkit-text-stroke:0.15px currentColor;">This metric is unaffected by date range changes</div>
<div class="t" style="left:869.42px;top:988.51px;font-size:42px;color:#161616;transform:scaleX(0.9904);transform-origin:0 0;">2.2</div>
<div class="t" style="left:930.50px;top:1008.57px;font-size:17px;color:#595959;transform:scaleX(0.7800);transform-origin:0 0;-webkit-text-stroke:0.15px currentColor;">%</div>
<svg class="ic" style="left:871.8px;top:1037.5px" width="14" height="9" viewBox="0 0 14 9"><path d="M0.7 0.8 L5 5.2 L7.4 2.7 L12.6 7.8" fill="none" stroke="#8a2a2a" stroke-width="1.3" stroke-linejoin="round" stroke-linecap="round"/><path d="M9.5 8 L13 8 L13 4.5" fill="none" stroke="#8a2a2a" stroke-width="1.3" stroke-linejoin="round" stroke-linecap="round"/></svg>
<div class="t" style="left:890.10px;top:1035.49px;font-size:12.6px;color:#8a2a2a;letter-spacing:-0.284px;-webkit-text-stroke:0.15px currentColor;">-47.0 %</div>
<div class="t" style="left:936.30px;top:1035.49px;font-size:12.6px;color:#595959;letter-spacing:0.177px;-webkit-text-stroke:0.15px currentColor;">vs last period</div>
<svg class="ic" style="left:0;top:0" width="1432" height="1116" viewBox="0 0 1432 1116"><path d="M1053.10,1039.00C1055.29,1039.00 1057.48,1039.00 1059.66,1039.00C1061.85,1039.00 1064.04,1039.00 1066.23,1039.00C1068.41,1039.00 1070.60,1039.00 1072.79,1039.00C1074.98,1039.00 1077.16,961.30 1079.35,961.30C1081.54,961.30 1083.73,1039.00 1085.91,1039.00C1088.10,1039.00 1090.29,961.30 1092.48,961.30C1094.67,961.30 1096.85,1039.00 1099.04,1039.00C1101.23,1039.00 1103.42,1039.00 1105.60,1039.00C1107.79,1039.00 1109.98,1039.00 1112.17,1039.00C1114.35,1039.00 1116.54,1039.00 1118.73,1039.00C1120.92,1039.00 1123.11,1039.00 1125.29,1039.00C1127.48,1039.00 1129.67,1039.00 1131.86,1039.00C1134.04,1039.00 1136.23,1039.00 1138.42,1039.00C1140.61,1039.00 1142.79,1039.00 1144.98,1039.00C1147.17,1039.00 1149.36,1039.00 1151.54,1039.00C1153.73,1039.00 1155.92,1039.00 1158.11,1039.00C1160.30,1039.00 1162.48,1039.00 1164.67,1039.00C1166.86,1039.00 1169.05,1039.00 1171.23,1039.00C1173.42,1039.00 1175.61,1039.00 1177.80,1039.00C1179.98,1039.00 1182.17,1039.00 1184.36,1039.00C1186.55,1039.00 1188.74,1039.00 1190.92,1039.00C1193.11,1039.00 1195.30,1039.00 1197.49,1039.00C1199.67,1039.00 1201.86,1039.00 1204.05,1039.00C1206.24,1039.00 1208.42,1039.00 1210.61,1039.00C1212.80,1039.00 1214.99,1039.00 1217.17,1039.00C1219.36,1039.00 1221.55,1039.00 1223.74,1039.00C1225.93,1039.00 1228.11,1039.00 1230.30,1039.00L1230.30,1038L1053.10,1038Z" fill="rgba(174,37,68,0.09)"/><line x1="1028.7" y1="1038.5" x2="1253.7" y2="1038.5" stroke="#a3a9b6" stroke-width="1"/><path d="M1053.10,1039.00C1055.29,1039.00 1057.48,1039.00 1059.66,1039.00C1061.85,1039.00 1064.04,1039.00 1066.23,1039.00C1068.41,1039.00 1070.60,1039.00 1072.79,1039.00C1074.98,1039.00 1077.16,961.30 1079.35,961.30C1081.54,961.30 1083.73,1039.00 1085.91,1039.00C1088.10,1039.00 1090.29,961.30 1092.48,961.30C1094.67,961.30 1096.85,1039.00 1099.04,1039.00C1101.23,1039.00 1103.42,1039.00 1105.60,1039.00C1107.79,1039.00 1109.98,1039.00 1112.17,1039.00C1114.35,1039.00 1116.54,1039.00 1118.73,1039.00C1120.92,1039.00 1123.11,1039.00 1125.29,1039.00C1127.48,1039.00 1129.67,1039.00 1131.86,1039.00C1134.04,1039.00 1136.23,1039.00 1138.42,1039.00C1140.61,1039.00 1142.79,1039.00 1144.98,1039.00C1147.17,1039.00 1149.36,1039.00 1151.54,1039.00C1153.73,1039.00 1155.92,1039.00 1158.11,1039.00C1160.30,1039.00 1162.48,1039.00 1164.67,1039.00C1166.86,1039.00 1169.05,1039.00 1171.23,1039.00C1173.42,1039.00 1175.61,1039.00 1177.80,1039.00C1179.98,1039.00 1182.17,1039.00 1184.36,1039.00C1186.55,1039.00 1188.74,1039.00 1190.92,1039.00C1193.11,1039.00 1195.30,1039.00 1197.49,1039.00C1199.67,1039.00 1201.86,1039.00 1204.05,1039.00C1206.24,1039.00 1208.42,1039.00 1210.61,1039.00C1212.80,1039.00 1214.99,1039.00 1217.17,1039.00C1219.36,1039.00 1221.55,1039.00 1223.74,1039.00C1225.93,1039.00 1228.11,1039.00 1230.30,1039.00" fill="none" stroke="#ae2544" stroke-width="2" stroke-linejoin="round" stroke-linecap="round"/></svg>
<div class="t" style="left:1037.50px;top:1046.19px;font-size:11px;color:#6e6e6e;letter-spacing:0.496px;;">Dec 9</div>
<div class="t" style="left:1215.60px;top:1046.19px;font-size:11px;color:#6e6e6e;letter-spacing:0.502px;;">Jan 5</div>
</body></html>
